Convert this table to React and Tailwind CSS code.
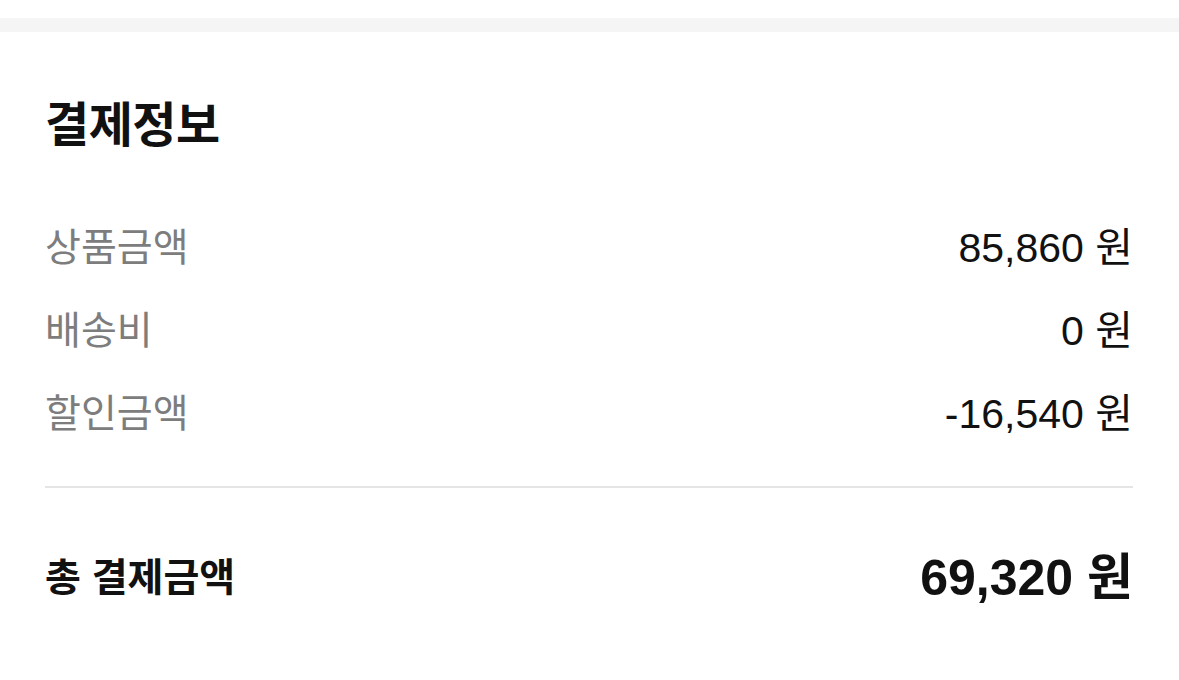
export default function App() {
  const rows = [
    { label: '상품금액', value: '85,860 원' },
    { label: '배송비', value: '0 원' },
    { label: '할인금액', value: '-16,540 원' },
  ];

  return (
    <div
      className="w-[1179px] h-[680px] bg-white overflow-hidden"
      style={{ fontFamily: '"Liberation Sans", "Noto Sans CJK KR", sans-serif' }}
    >
      <div className="h-[18px]" />
      <div className="h-[14px] bg-[#f5f5f5]" />
      <section className="pl-[45px] pr-[46px] pt-[64px]">
        <h2 className="text-[48px] leading-[60px] font-bold text-[#111] tracking-[-0.5px]">결제정보</h2>
        <div className="mt-[51px]">
          {rows.map((r) => (
            <div key={r.label} className="h-[83px] flex items-center justify-between">
              <span className="text-[39px] text-[#7d7d7d]">{r.label}</span>
              <span className="text-[41px] text-[#111]">{r.value}</span>
            </div>
          ))}
        </div>
        <div className="mt-[30px] h-[2px] bg-[#e5e5e5]" />
        <div className="mt-[49px] h-[83px] flex items-center justify-between">
          <span className="text-[39px] font-bold text-[#111]">총 결제금액</span>
          <span className="text-[50px] font-bold text-[#111]">69,320 원</span>
        </div>
      </section>
    </div>
  );
}
